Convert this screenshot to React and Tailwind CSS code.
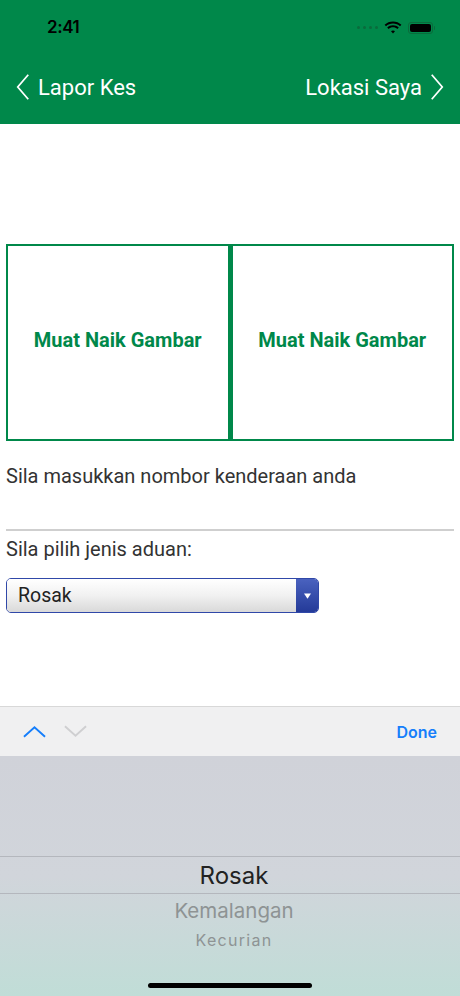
import React from 'react';

const Chevron = ({ dir = 'left', className = '' }) => (
  <svg viewBox="0 0 16 30" className={className} fill="none" stroke="currentColor" strokeWidth="2">
    {dir === 'left' ? <path d="M14 1 L2 15 L14 29" /> : <path d="M2 1 L14 15 L2 29" />}
  </svg>
);

const UploadBox = ({ extra = '' }) => (
  <div className={`flex-1 flex items-center justify-center border-2 border-[#00884a] pb-[6px] ${extra}`}>
    <span className="text-[20px] font-bold text-[#00884a]">Muat Naik Gambar</span>
  </div>
);

export default function App() {
  return (
    <div className="w-[460px] h-[996px] flex flex-col bg-white overflow-hidden" style={{ fontFamily: 'Roboto, "Noto Sans", sans-serif' }}>
      {/* Header */}
      <div className="bg-[#00884a] h-[124px] flex flex-col">
        <div className="h-[52px] flex items-center justify-between pl-[47px] pr-[25px] pt-[3px]">
          <span className="text-[17px] font-semibold text-black tracking-tight" style={{ fontFamily: 'Inter, sans-serif' }}>2:41</span>
          <div className="flex items-center gap-[6px]">
            <div className="flex gap-[3px] items-end">
              <span className="w-[3px] h-[3px] rounded-full bg-[#0a6b3c]" />
              <span className="w-[3px] h-[3px] rounded-full bg-[#0a6b3c]" />
              <span className="w-[3px] h-[3px] rounded-full bg-[#0a6b3c]" />
              <span className="w-[3px] h-[3px] rounded-full bg-[#0a6b3c]" />
            </div>
            <svg viewBox="0 0 18 13" className="w-[18px] h-[13px]" fill="black">
              <path d="M9 2.5c2.7 0 5.2 1 7 2.8l1.4-1.5C15.2 1.7 12.2.5 9 .5S2.8 1.7.6 3.8L2 5.3C3.8 3.5 6.3 2.5 9 2.5z" />
              <path d="M9 6.2c1.7 0 3.2.6 4.4 1.7l1.4-1.5C13.2 5 11.2 4.2 9 4.2S4.8 5 3.2 6.4l1.4 1.5C5.8 6.8 7.3 6.2 9 6.2z" />
              <path d="M9 9.5c.8 0 1.5.3 2 .8L9 12.5 7 10.3c.5-.5 1.2-.8 2-.8z" />
            </svg>
            <div className="flex items-center">
              <div className="w-[25px] h-[12px] rounded-[3px] border border-[#0a6b3c] p-[1px]">
                <div className="w-full h-full rounded-[2px] bg-black" />
              </div>
              <div className="w-[1.5px] h-[4px] bg-[#0a6b3c] ml-[1px] rounded-r" />
            </div>
          </div>
        </div>
        <div className="flex-1 flex items-center justify-between pl-[16px] pr-[16px] text-white pb-[2px]">
          <div className="flex items-center gap-[8px]">
            <Chevron dir="left" className="w-[14px] h-[28px]" />
            <span className="text-[22px]">Lapor Kes</span>
          </div>
          <div className="flex items-center gap-[8px]">
            <span className="text-[22px]">Lokasi Saya</span>
            <Chevron dir="right" className="w-[14px] h-[28px]" />
          </div>
        </div>
      </div>

      {/* Content */}
      <div className="flex-1 flex flex-col px-[6px] pt-[120px]">
        <div className="flex h-[197px]">
          <UploadBox extra="border-r-[3px]" />
          <UploadBox extra="border-l-[2px]" />
        </div>
        <p className="mt-[22px] text-[20px] text-[#333] leading-[26px]">Sila masukkan nombor kenderaan anda</p>
        <div className="mt-[40px] h-[2px] bg-[#cfcfcf]" />
        <p className="mt-[5px] text-[20px] text-[#333] leading-[26px]">Sila pilih jenis aduan:</p>
        <div className="mt-[16px] w-[313px] h-[35px] flex rounded-[5px] border border-[#3048a8] overflow-hidden">
          <div className="flex-1 flex items-center pl-[11px] bg-gradient-to-b from-white via-[#f1f1f1] to-[#d9d9d9]">
            <span className="text-[19.5px] text-[#222]">Rosak</span>
          </div>
          <div className="w-[22px] flex items-center justify-center bg-gradient-to-b from-[#4a62bf] to-[#243a98]">
            <svg viewBox="0 0 8 6" className="w-[7px] h-[6px]" fill="white"><path d="M0 0 H8 L4 6 Z" /></svg>
          </div>
        </div>
      </div>

      {/* Keyboard toolbar */}
      <div className="h-[50px] bg-[#f0f0f1] border-t border-[#d8d8d8] flex items-center justify-between pl-[23px] pr-[23px]">
        <div className="flex items-center gap-[18px]">
          <svg viewBox="0 0 24 13" className="w-[23px] h-[13px]" fill="none" stroke="#157efb" strokeWidth="2"><path d="M1 12 L12 2 L23 12" /></svg>
          <svg viewBox="0 0 24 13" className="w-[23px] h-[13px]" fill="none" stroke="#cfcfd1" strokeWidth="2"><path d="M1 1 L12 11 L23 1" /></svg>
        </div>
        <span className="text-[16px] font-semibold text-[#157efb]" style={{ fontFamily: 'Inter, sans-serif' }}>Done</span>
      </div>

      {/* Picker */}
      <div className="h-[240px] flex flex-col bg-gradient-to-b from-[#d0d2d9] via-[#d1d5db] to-[#c0ddd7]" style={{ fontFamily: 'Inter, "Liberation Sans", sans-serif' }}>
        <div className="h-[100px]" />
        <div className="h-[38px] border-y border-[#b4b7bd] flex items-center justify-center pt-[2px] pl-[8px]">
          <span className="text-[24px] text-[#222]">Rosak</span>
        </div>
        <div className="h-[34px] flex items-center justify-center pl-[8px]">
          <span className="text-[20.5px] text-[#8e9394]">Kemalangan</span>
        </div>
        <div className="h-[24px] flex items-center justify-center pl-[8px]">
          <span className="text-[16px] tracking-[0.08em] text-[#8e9394]">Kecurian</span>
        </div>
        <div className="flex-1 flex items-end justify-center pb-[8px]">
          <div className="w-[164px] h-[5px] rounded-full bg-black" />
        </div>
      </div>
    </div>
  );
}
